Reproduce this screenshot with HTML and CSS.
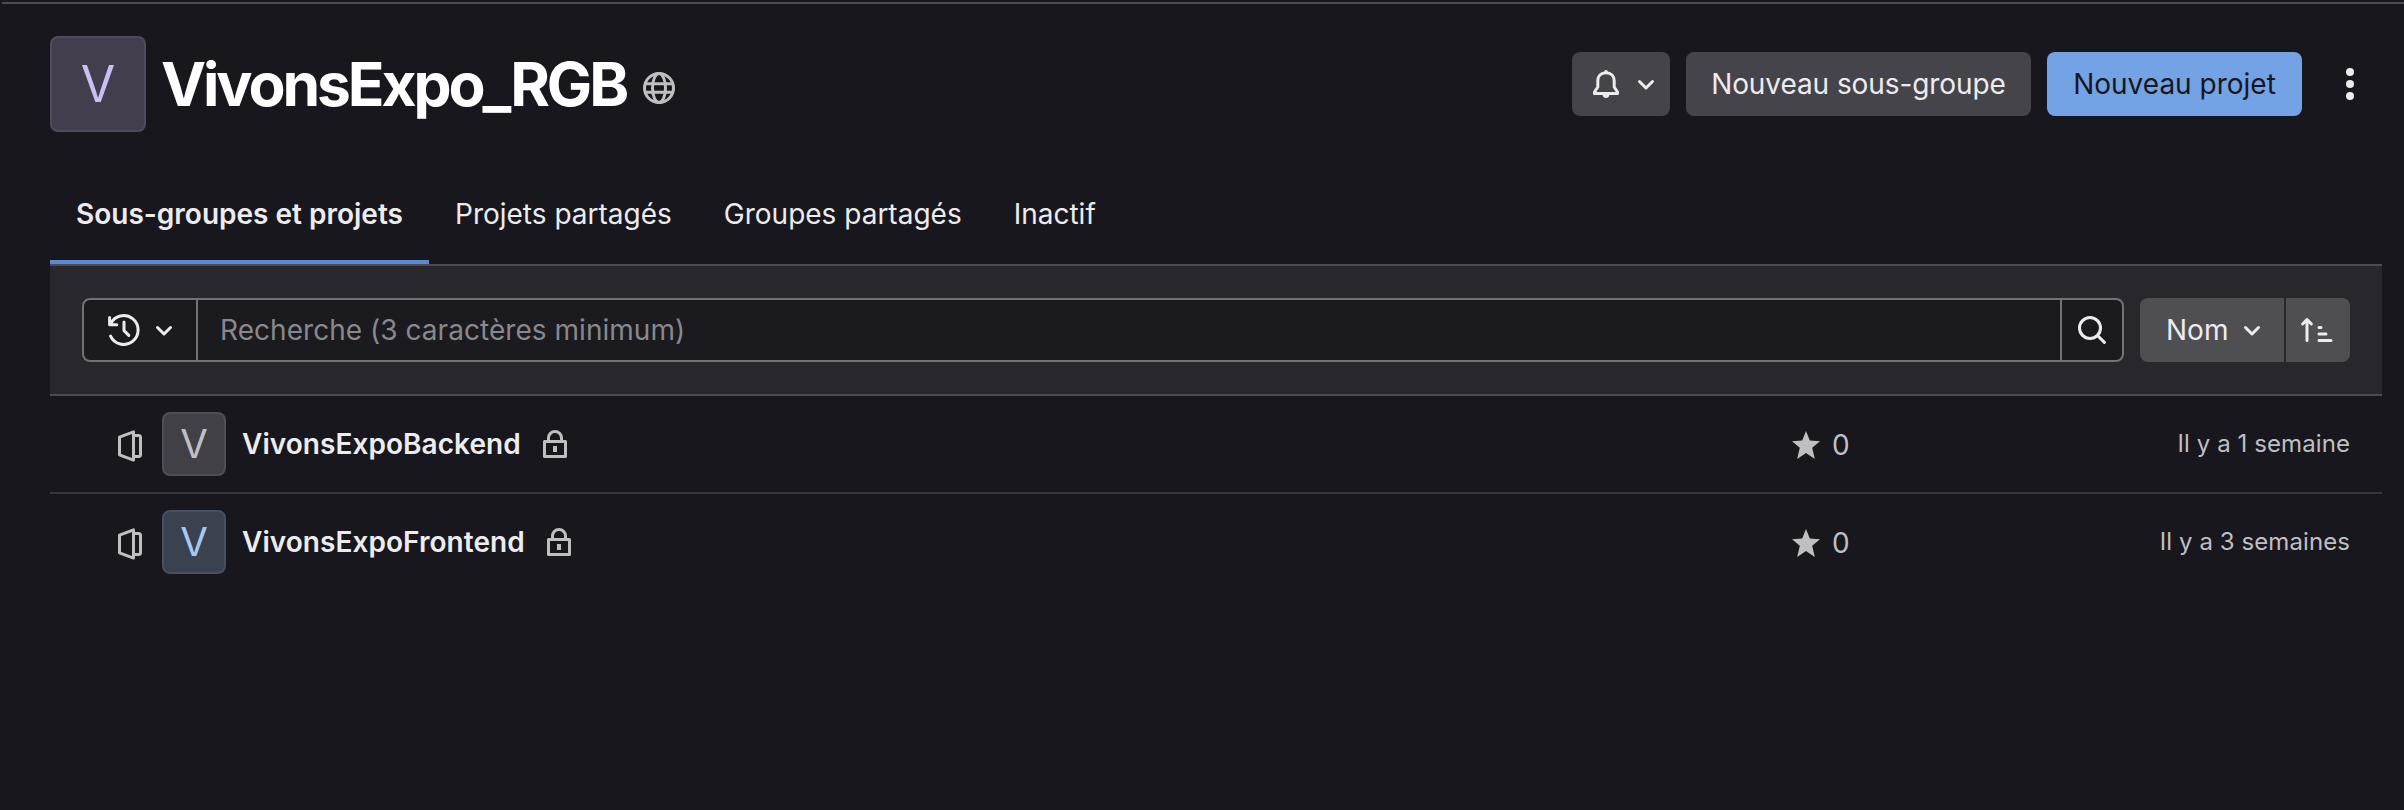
FILE: index.html
```html
<!DOCTYPE html>
<html lang="fr">
<head>
<meta charset="utf-8">
<title>VivonsExpo_RGB</title>
<link rel="stylesheet" href="styles.css">
</head>
<body>
<div class="topline"></div>
<main class="page">
  <header class="head">
    <div class="avatar avatar-lg">V</div>
    <h1 class="title">VivonsExpo_RGB</h1>
    <svg class="icon globe" viewBox="0 0 16 16"><g fill="none" stroke="currentColor" stroke-width="1.5"><circle cx="8" cy="8" r="7.25"/><ellipse cx="8" cy="8" rx="3.25" ry="7.25"/><path d="M1.2 5.9h13.6M1.2 10.1h13.6"/></g></svg>
    <div class="actions">
      <button class="btn btn-bell">
        <svg class="icon" viewBox="0 0 16 16"><path fill="none" stroke="currentColor" stroke-width="1.5" stroke-linejoin="round" d="M8 2.4C5.4 2.4 3.9 4.1 3.9 6.4V9.5L2.25 12V12.75H13.75V12L12.1 9.5V6.4C12.1 4.1 10.6 2.4 8 2.4Z"/><path fill="currentColor" d="M7.1 1.9a.9.9 0 0 1 1.8 0v1H7.1zM6.3 13.3h3.4a1.7 1.7 0 0 1-3.4 0z"/></svg>
        <svg class="icon" viewBox="0 0 16 16"><path class="chev" d="M4.75 6.75L8 10l3.25-3.25"/></svg>
      </button>
      <button class="btn btn-sub">Nouveau sous-groupe</button>
      <button class="btn btn-primary">Nouveau projet</button>
      <svg class="icon dots" viewBox="0 0 16 16"><g fill="currentColor"><circle cx="8" cy="2" r="2"/><circle cx="8" cy="8" r="2"/><circle cx="8" cy="14" r="2"/></g></svg>
    </div>
  </header>
  <nav class="tabs">
    <a class="tab active">Sous-groupes et projets</a>
    <a class="tab">Projets partagés</a>
    <a class="tab">Groupes partagés</a>
    <a class="tab">Inactif</a>
  </nav>
  <section class="filter">
    <div class="search">
      <div class="history">
        <svg class="icon" viewBox="0 0 16 16"><g fill="none" stroke="currentColor" stroke-width="1.5" stroke-linecap="round" stroke-linejoin="round"><path d="M1.3 5A7.2 7.2 0 1 1 1.3 11M.8 1.8V5.4H4.4M8 4v4.3l2.4 2.4"/></g></svg>
        <svg class="icon" viewBox="0 0 16 16"><path class="chev" d="M4.75 6.75L8 10l3.25-3.25"/></svg>
      </div>
      <div class="field">Recherche (3 caractères minimum)</div>
      <div class="go"><svg class="icon" viewBox="0 0 16 16"><g fill="none" stroke="currentColor" stroke-width="1.5" stroke-linecap="round"><circle cx="7" cy="7" r="5.25"/><path d="M11 11l3.2 3.2"/></g></svg></div>
    </div>
    <div class="sort">
      <button class="sort-name">Nom <svg class="icon" viewBox="0 0 16 16"><path class="chev" d="M4.75 6.75L8 10l3.25-3.25"/></svg></button>
      <button class="sort-dir"><svg class="icon" viewBox="0 0 16 16"><g fill="none" stroke="currentColor" stroke-width="1.5" stroke-linecap="round" stroke-linejoin="round"><path d="M3 13.2V2.8M.8 5L3 2.8 5.2 5M9 6.7h1M9 10h3.5M9 13.2h6"/></g></svg></button>
    </div>
  </section>
  <ul class="list">
    <li class="row">
      <svg class="icon kind" viewBox="0 0 16 16"><path fill="none" stroke="currentColor" stroke-width="1.5" stroke-linejoin="round" d="M9.75.95v14.1L2.75 12.4V3.6zM9.75 2.75h2.5a1 1 0 0 1 1 1v8.5a1 1 0 0 1-1 1h-2.5"/></svg>
      <div class="avatar avatar-gray">V</div>
      <a class="name">VivonsExpoBackend</a>
      <svg class="icon lock" viewBox="0 0 16 16"><path fill="none" stroke="currentColor" stroke-width="1.5" stroke-linejoin="round" d="M2.75 6.75h10.5v7.5H2.75zM4.75 6.75V5a3.25 3.25 0 0 1 6.5 0v1.75"/><path fill="currentColor" d="M7 9h2v3H7z"/></svg>
      <span class="stars"><svg class="icon" viewBox="0 0 16 16"><path fill="currentColor" d="M8 1l1.9 4.7 5.1.4-3.9 3.3L12.4 15 8 12l-4.4 3 1.3-5.6L1 6.1l5.1-.4z"/></svg>0</span>
      <time class="date">Il y a 1 semaine</time>
    </li>
    <li class="row">
      <svg class="icon kind" viewBox="0 0 16 16"><path fill="none" stroke="currentColor" stroke-width="1.5" stroke-linejoin="round" d="M9.75.95v14.1L2.75 12.4V3.6zM9.75 2.75h2.5a1 1 0 0 1 1 1v8.5a1 1 0 0 1-1 1h-2.5"/></svg>
      <div class="avatar avatar-blue">V</div>
      <a class="name">VivonsExpoFrontend</a>
      <svg class="icon lock" viewBox="0 0 16 16"><path fill="none" stroke="currentColor" stroke-width="1.5" stroke-linejoin="round" d="M2.75 6.75h10.5v7.5H2.75zM4.75 6.75V5a3.25 3.25 0 0 1 6.5 0v1.75"/><path fill="currentColor" d="M7 9h2v3H7z"/></svg>
      <span class="stars"><svg class="icon" viewBox="0 0 16 16"><path fill="currentColor" d="M8 1l1.9 4.7 5.1.4-3.9 3.3L12.4 15 8 12l-4.4 3 1.3-5.6L1 6.1l5.1-.4z"/></svg>0</span>
      <time class="date">Il y a 3 semaines</time>
    </li>
  </ul>
</main>
</body>
</html>
```
FILE: styles.css
```css
* { box-sizing: border-box; }
body {
  margin: 0;
  height: 810px;
  overflow: hidden;
  background: #18171d;
  color: #ececef;
  font: 28px/40px Inter, "Liberation Sans", sans-serif;
}
button { font: inherit; color: inherit; border: 0; margin: 0; }
.topline { height: 2px; margin: 2px 0 0 2px; background: #4c4b51; }
.page { padding: 32px 22px 0 50px; }
.icon { width: 32px; height: 32px; flex: none; display: block; overflow: visible; }
.chev { fill: none; stroke: currentColor; stroke-width: 1.5; stroke-linecap: round; stroke-linejoin: round; }

.head { display: flex; align-items: center; height: 96px; }
.avatar {
  width: 64px; height: 64px; flex: none;
  display: flex; align-items: center; justify-content: center;
  border: 2px solid #4f4e54; border-radius: 8px;
  font-size: 40px; line-height: 1;
}
.avatar-lg { width: 96px; height: 96px; font-size: 50px; background: #433e4e; border-color: #504b5c; color: #cbbff2; }
.avatar-gray { background: #414046; border-color: #504f55; color: #bfbfc3; }
.avatar-blue { background: #3a4250; border-color: #47505f; color: #a6c8f2; }
.title { width: 481px; margin: 0; padding-left: 15px; white-space: nowrap; font-size: 60.5px; line-height: 72px; font-weight: 650; letter-spacing: -3.1px; color: #fff; }
.globe { margin: 8px 0 0 16px; color: #bfbfc3; }
.actions { display: flex; align-items: center; gap: 16px; margin-left: auto; padding-right: 16px; }
.btn { height: 64px; border-radius: 8px; background: #45444a; padding: 0; white-space: nowrap; }
.btn-bell { width: 98px; display: flex; align-items: center; padding-left: 18px; gap: 8px; }
.btn-sub { width: 345px; letter-spacing: -0.08px; }
.btn-primary { width: 255px; background: #73a3e4; color: #18171d; }
.dots { margin-left: 16px; }

.tabs { display: flex; height: 134px; padding-top: 50px; border-bottom: 2px solid #4c4b51; }
.tab { height: 82px; padding: 12px 26px 0; }
.tab.active { font-weight: 600; white-space: nowrap; width: 379px; border-bottom: 4px solid #568bd8; }

.filter { display: flex; gap: 16px; padding: 32px; height: 130px; background: #28272d; border-bottom: 2px solid #4c4b51; }
.search { flex: 1; display: flex; height: 64px; border: 2px solid #737278; border-radius: 8px; background: #1b1a1f; }
.history { width: 114px; display: flex; align-items: center; gap: 8px; padding-left: 24px; border-right: 2px solid #737278; }
.field { flex: 1; padding: 10px 22px; letter-spacing: 0.04px; color: #89888d; }
.go { width: 62px; display: flex; align-items: center; justify-content: center; border-left: 2px solid #737278; }
.sort { display: flex; gap: 2px; }
.sort button { height: 64px; display: flex; align-items: center; background: #4f4e53; }
.sort-name { width: 144px; gap: 8px; padding: 0 0 0 26px; border-radius: 8px 0 0 8px; }
.sort-dir { width: 64px; padding: 0 0 0 15px; border-radius: 0 8px 8px 0; }

.list { list-style: none; margin: 0; padding: 0; }
.row { display: flex; align-items: center; height: 98px; padding: 0 32px 0 64px; border-bottom: 2px solid #38373d; }
.row:last-child { border-bottom-color: transparent; }
.kind { margin: 4px 16px 0 0; color: #bfbfc3; }
.name { margin-left: 16px; font-weight: 600; letter-spacing: 0.05px; }
.lock { margin: 0 0 0 18px; color: #bfbfc3; }
.stars { margin-left: auto; width: 410px; display: flex; align-items: center; gap: 10px; padding-top: 2px; color: #bfbfc3; }
.date { width: 150px; display: flex; justify-content: flex-end; white-space: nowrap; font-size: 24px; letter-spacing: 0.08px; color: #bfbfc3; }
```
